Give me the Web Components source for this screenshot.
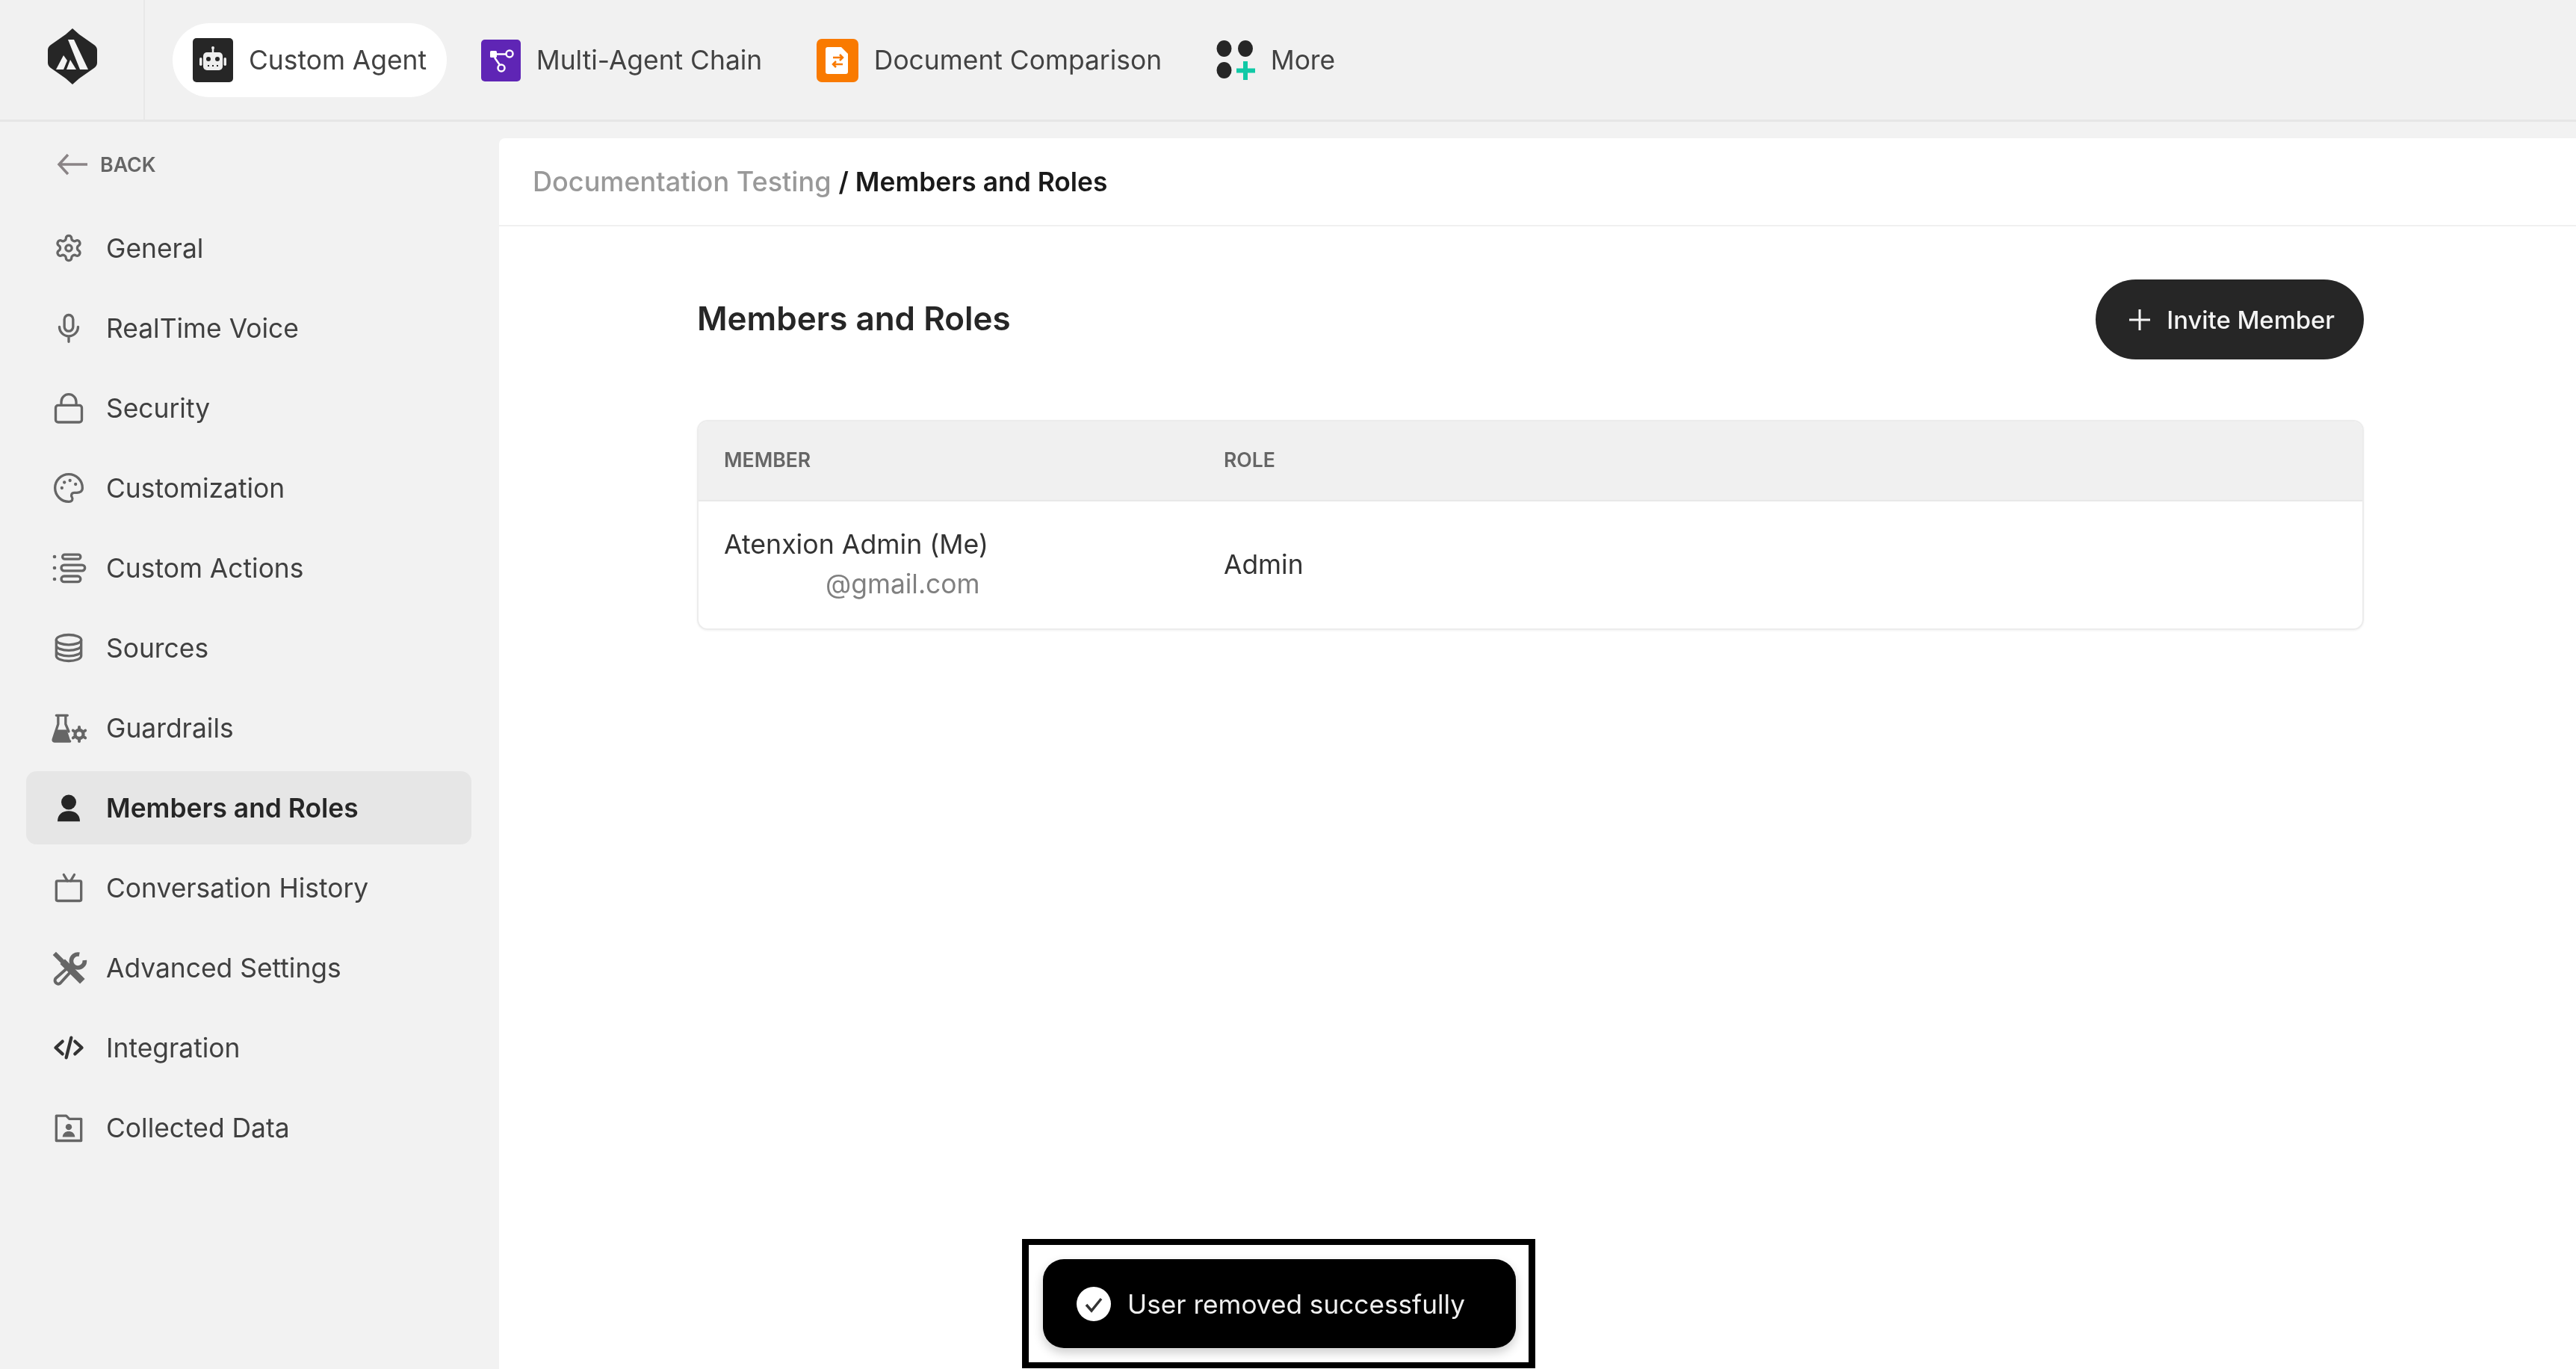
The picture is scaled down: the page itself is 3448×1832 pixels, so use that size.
<!DOCTYPE html>
<html lang="en">
<head>
<meta charset="utf-8">
<title>Members and Roles</title>
<style>
  html, body { margin: 0; height: 100%; background: #f2f2f2; overflow: hidden; }
  body { font-family: 'Inter', 'Liberation Sans', sans-serif; color: #262626; }
</style>
</head>
<body>
<app-shell>
  <top-nav slot="top">
    <nav-tab icon="agent" active>Custom Agent</nav-tab>
    <nav-tab icon="chain">Multi-Agent Chain</nav-tab>
    <nav-tab icon="doc">Document Comparison</nav-tab>
    <nav-tab icon="more">More</nav-tab>
  </top-nav>
  <side-nav slot="side">
    <side-item icon="gear">General</side-item>
    <side-item icon="mic">RealTime Voice</side-item>
    <side-item icon="lock">Security</side-item>
    <side-item icon="palette">Customization</side-item>
    <side-item icon="actions">Custom Actions</side-item>
    <side-item icon="db">Sources</side-item>
    <side-item icon="flask">Guardrails</side-item>
    <side-item icon="person" active>Members and Roles</side-item>
    <side-item icon="tv">Conversation History</side-item>
    <side-item icon="tools">Advanced Settings</side-item>
    <side-item icon="code">Integration</side-item>
    <side-item icon="folder">Collected Data</side-item>
  </side-nav>
  <members-page slot="main"></members-page>
  <toast-note slot="overlay">User removed successfully</toast-note>
</app-shell>

<script>
// icons for the top tabs, each drawn in its own box
const tabIcons = {
  agent: `<svg width="54" height="59" viewBox="0 0 54 59">
    <rect width="54" height="59" rx="5" fill="#262626"/>
    <path d="M27 13v6" stroke="#eee" stroke-width="2.5"/><circle cx="27" cy="13" r="2" fill="#eee"/>
    <rect x="14" y="19" width="26" height="24" rx="5" fill="#eee"/>
    <rect x="9" y="26" width="3.5" height="11" rx="1.7" fill="#eee"/><rect x="41.500" y="26" width="3.500" height="11" rx="1.700" fill="#eee"/>
    <circle cx="21" cy="28" r="3" fill="#262626"/><circle cx="33" cy="28" r="3" fill="#262626"/>
    <path d="M20 37h2m4 0h2m4 0h2" stroke="#262626" stroke-width="2"/></svg>`,
  chain: `<svg width="53" height="56" viewBox="0 0 53 56">
    <rect width="53" height="56" rx="5" fill="#5f25b5"/>
    <rect x="12" y="15" width="9" height="9" rx="1.500" fill="#fff"/>
    <circle cx="38" cy="19" r="4.500" fill="none" stroke="#fff" stroke-width="2.500"/>
    <circle cx="27" cy="38" r="4.500" fill="none" stroke="#fff" stroke-width="2.500"/>
    <path d="M21 19.500h12.500M18 24l7 10" stroke="#fff" stroke-width="2.500" fill="none"/></svg>`,
  doc: `<svg width="56" height="58" viewBox="0 0 56 58">
    <rect width="56" height="58" rx="7" fill="#f97a00"/>
    <path d="M15 11h18l9 9v24a3 3 0 0 1-3 3H15a3 3 0 0 1-3-3V14a3 3 0 0 1 3-3z" fill="#fff"/>
    <path d="M22 25h13M31 21l4 4-4 4M35 34H22M26 30l-4 4 4 4" fill="none" stroke="#f97a00" stroke-width="2.500"/></svg>`,
  more: `<svg width="52" height="54" viewBox="0 0 52 54">
    <ellipse cx="10.500" cy="11" rx="10" ry="11" fill="#262626"/><ellipse cx="39" cy="11" rx="10" ry="11" fill="#262626"/>
    <ellipse cx="10.500" cy="40" rx="10" ry="11" fill="#262626"/>
    <path d="M39 28v25M27 40.500h25" stroke="#10c9a6" stroke-width="6"/></svg>`
};

// sidebar icons share one 24 unit box, a few spill over it on purpose
const sideIcons = {
  gear: `<path d="M12.220 2h-.44a2 2 0 0 0-2 2v.18a2 2 0 0 1-1 1.730l-.43.25a2 2 0 0 1-2 0l-.15-.08a2 2 0 0 0-2.730.73l-.22.38a2 2 0 0 0 .73 2.730l.15.1a2 2 0 0 1 1 1.720v.51a2 2 0 0 1-1 1.740l-.15.09a2 2 0 0 0-.73 2.730l.22.38a2 2 0 0 0 2.730.73l.15-.08a2 2 0 0 1 2 0l.43.25a2 2 0 0 1 1 1.730V20a2 2 0 0 0 2 2h.44a2 2 0 0 0 2-2v-.18a2 2 0 0 1 1-1.730l.43-.25a2 2 0 0 1 2 0l.15.08a2 2 0 0 0 2.730-.73l.22-.39a2 2 0 0 0-.73-2.730l-.15-.08a2 2 0 0 1-1-1.740v-.5a2 2 0 0 1 1-1.740l.15-.09a2 2 0 0 0 .73-2.730l-.22-.38a2 2 0 0 0-2.730-.73l-.15.08a2 2 0 0 1-2 0l-.43-.25a2 2 0 0 1-1-1.730V4a2 2 0 0 0-2-2z"/><circle cx="12" cy="12" r="2.500"/>`,
  mic: `<rect x="8.500" y="1.500" width="7" height="13" rx="3.500"/><path d="M4.500 11a7.500 7.500 0 0 0 15 0M12 18.500v4.500"/>`,
  lock: `<rect x="1.500" y="9.800" width="21" height="13.600" rx="2"/><path d="M6 9.800V7a6 6 0 0 1 12 0v2.800"/>`,
  palette: `<path d="M12 23a11 11 0 1 1 11-11c0 2.800-2.200 3.800-4.400 3.800h-2.100c-2.300 0-3 2.300-1.800 3.900.7 1 .3 3.300-2.700 3.300z"/><g fill="#666" stroke="none"><circle cx="6.500" cy="12" r="1.300"/><circle cx="8.500" cy="7.500" r="1.300"/><circle cx="13" cy="6" r="1.300"/><circle cx="17.500" cy="9" r="1.300"/></g>`,
  actions: `<g fill="#666" stroke="none"><circle cx=".6" cy="3" r="1.400"/><circle cx=".6" cy="12" r="1.400"/><circle cx=".6" cy="21" r="1.400"/></g><rect x="7" y="1.300" width="14.500" height="3.600" rx="1.800"/><rect x="6" y="9.700" width="19" height="4.600" rx="2.300"/><rect x="6" y="18.600" width="15.500" height="4.600" rx="2.300"/>`,
  db: `<ellipse cx="12" cy="5.500" rx="10" ry="4"/><path d="M2 5.500v13c0 2.200 4.500 4 10 4s10-1.800 10-4v-13M2 10c0 2.200 4.500 4 10 4s10-1.800 10-4M2 14.500c0 2.200 4.500 4 10 4s10-1.800 10-4"/>`,
  flask: `<path d="M2 2H11M3.500 2V9L-.5 21.300q-.3 1.500 1 1.500H13M9.500 2V9l2.500 6"/><path d="M2 13.500H10.500L13.500 22.800H.5L-.5 21z" fill="#666" stroke="none"/><circle cx="20.400" cy="17.100" r="3.300" stroke-width="2.600"/><path d="M20.400 11.400v1.800M20.400 21v1.800M15.500 14.200l1.600 1M23.700 19l1.600 1M15.500 20l1.600-1M23.700 15.200l1.600-1" stroke-width="2.400"/>`,
  tv: `<rect x="2" y="6.500" width="20" height="16" rx="1"/><path d="M8 1.500l3 5M16.500 1.500l-3 5"/>`,
  tools: `<path d="M14 9.500L1.500 20.500c-2 2.500 1.500 6 3.800 3.800L16.500 12" stroke-width="2.400"/><path d="M.5 .5L8 8" stroke-width="3.600" stroke-linecap="butt"/><path d="M7 7L23 23" stroke-width="5.500" stroke-linecap="butt"/><path d="M20.500 1.300A5.400 5.400 0 1 0 24.800 6" stroke-width="3.400" stroke-linecap="butt"/>`,
  folder: `<path d="M2 22.500V2.500h8l2.500 2.500h9.500v17.500z"/><circle cx="12" cy="11.500" r="2.500" fill="#666" stroke="none"/><path d="M7 19.500c.3-3 2.200-4.500 5-4.500s4.700 1.500 5 4.500z" fill="#666" stroke="none"/>`
};

const navTabTemplate = document.createElement('template');
navTabTemplate.innerHTML = `
  <style>
    :host { display: block; }
    .tab {
      display: flex;
      align-items: center;
      gap: 21px;
      height: 99px;
      padding: 0 27px;
      border-radius: 50px;
      font-size: 35.400px;
      line-height: 1;
      color: #424242;
      white-space: nowrap;
    }
    :host([active]) .tab { background: #fff; }
    svg { display: block; }
  </style>
  <div class="tab"><span class="icon"></span><slot></slot></div>
`;

class NavTab extends HTMLElement {
  connectedCallback() {
    if (this.shadowRoot) return;
    this.attachShadow({ mode: 'open' });
    this.shadowRoot.appendChild(navTabTemplate.content.cloneNode(true));
    this.shadowRoot.querySelector('.icon').innerHTML = tabIcons[this.getAttribute('icon')];
  }
}
customElements.define('nav-tab', NavTab);

const topNavTemplate = document.createElement('template');
topNavTemplate.innerHTML = `
  <style>
    :host {
      display: flex;
      align-items: stretch;
      height: 163px;
      box-sizing: border-box;
      border-bottom: 3px solid #e6e6e6;
      background: #f1f1f1;
    }
    .logo {
      flex: none;
      width: 194px;
      box-sizing: border-box;
      border-right: 2px solid #e8e8e8;
      padding: 38px 0 0 64px;
    }
    .tabs {
      display: flex;
      align-items: flex-start;
      gap: 18.600px;
      padding: 31px 0 0 37px;
    }
    svg { display: block; }
  </style>
  <div class="logo">
    <svg width="66" height="75" viewBox="0 0 66 75">
      <path d="M33 0l9 8 20 14q4 3 4 7v17q0 4-4 7L42 67l-9 8-9-8L4 53q-4-3-4-7V29q0-4 4-7L24 8z" fill="#262626"/>
      <path d="M27 15h8l19 40H43z" fill="#f4f4f4"/>
      <path d="M21 36l5 7-5 12H11z" fill="#f4f4f4"/>
      <path d="M30 42l8 13H25z" fill="#f4f4f4"/>
    </svg>
  </div>
  <div class="tabs"><slot></slot></div>
`;

class TopNav extends HTMLElement {
  constructor() {
    super();
    this.attachShadow({ mode: 'open' });
    this.shadowRoot.appendChild(topNavTemplate.content.cloneNode(true));
  }
}
customElements.define('top-nav', TopNav);

const sideItemTemplate = document.createElement('template');
sideItemTemplate.innerHTML = `
  <style>
    :host { display: block; }
    .item {
      display: flex;
      align-items: center;
      height: 98px;
      padding-left: 37px;
      gap: 30px;
      border-radius: 14px;
      font-size: 35.400px;
      color: #404040;
    }
    .icon { display: block; }
    svg {
      display: block;
      flex: none;
      width: 40px;
      height: 40px;
      overflow: visible;
      fill: none;
      stroke: #666;
      stroke-width: 2;
      stroke-linecap: round;
      stroke-linejoin: round;
    }
    :host([active]) .item { background: #e6e6e6; color: #262626; font-weight: 600; }
    .code { stroke: #333; stroke-width: 2.600; }
    .solid { fill: #262626; stroke: none; }
  </style>
  <div class="item"><span class="icon"></span><slot></slot></div>
`;

class SideItem extends HTMLElement {
  connectedCallback() {
    if (this.shadowRoot) return;
    this.attachShadow({ mode: 'open' });
    this.shadowRoot.appendChild(sideItemTemplate.content.cloneNode(true));
    const name = this.getAttribute('icon');
    let body = sideIcons[name];
    let cls = '';
    if (name === 'person') {
      body = '<circle cx="12" cy="7.500" r="6"/><path d="M3 23c0-5.500 3.500-8.500 9-8.500s9 3 9 8.500z"/>';
      cls = 'solid';
    }
    if (name === 'code') {
      body = '<path d="M7 7l-5.500 5L7 17M17 7l5.500 5-5.500 5M14 4l-4 16"/>';
      cls = 'code';
    }
    this.shadowRoot.querySelector('.icon').innerHTML = `<svg class="${cls}" viewBox="0 0 24 24">${body}</svg>`;
  }
}
customElements.define('side-item', SideItem);

const sideNavTemplate = document.createElement('template');
sideNavTemplate.innerHTML = `
  <style>
    :host { display: block; padding: 0 37px 0 35px; }
    .back {
      display: flex;
      align-items: center;
      gap: 17px;
      height: 60px;
      padding: 27px 0 0 41px;
      margin-bottom: 33px;
      font-size: 26.800px;
      font-weight: 600;
      color: #666;
    }
    .back svg { display: block; }
    .list { display: grid; gap: 9px; }
  </style>
  <div class="back">
    <svg width="41" height="30" viewBox="0 0 41 30" fill="none" stroke="#8a8486" stroke-width="3.500"><path d="M41 15H3M15 2L3 15l12 13"/></svg>
    <span>BACK</span>
  </div>
  <div class="list"><slot></slot></div>
`;

class SideNav extends HTMLElement {
  constructor() {
    super();
    this.attachShadow({ mode: 'open' });
    this.shadowRoot.appendChild(sideNavTemplate.content.cloneNode(true));
  }
}
customElements.define('side-nav', SideNav);

const membersPageTemplate = document.createElement('template');
membersPageTemplate.innerHTML = `
  <style>
    :host { display: block; height: 100%; background: #fff; border-top-left-radius: 8px; }
    .crumbs {
      display: flex;
      align-items: center;
      gap: 10px;
      height: 118px;
      padding-left: 45px;
      box-sizing: border-box;
      border-bottom: 2px solid #f0f0f0;
      font-size: 36.100px;
      font-weight: 500;
      color: #999;
    }
    .crumbs b { font-size: 35.400px; font-weight: 600; color: #1a1a1a; }
    .content { padding: 71px 284px 0 265px; }
    .head { display: flex; justify-content: space-between; align-items: center; margin-bottom: 81px; }
    h1 { margin: 0 0 4px; font-size: 44px; font-weight: 600; color: #262626; }
    .invite {
      display: flex;
      align-items: center;
      gap: 22px;
      height: 107px;
      padding: 0 39px 0 45px;
      border: 0;
      border-radius: 54px;
      background: #262626;
      color: #f4f4f4;
      font: 500 32.800px 'Inter', 'Liberation Sans', sans-serif;
    }
    .table {
      border: 2px solid #ececec;
      border-radius: 14px;
      overflow: hidden;
      box-shadow: 0 1px 3px rgba(0,0,0,.06);
    }
    .row { display: grid; grid-template-columns: 669px 1fr; align-items: center; padding-left: 34px; }
    .row.th {
      height: 107px;
      padding-bottom: 3px;
      background: #f0f0f0;
      border-bottom: 2px solid #e8e8e8;
      box-sizing: border-box;
      font-size: 26.600px;
      font-weight: 600;
      color: #666;
    }
    .row.td { height: 170px; padding-bottom: 2px; box-sizing: border-box; font-size: 35.400px; color: #333; }
    .name { line-height: 54px; }
    .name div:first-child { font-size: 35.700px; }
    .mail { padding-left: 136px; color: #808080; }
  </style>
  <div class="crumbs"><span>Documentation Testing</span><b>/ Members and Roles</b></div>
  <div class="content">
    <div class="head">
      <h1>Members and Roles</h1>
      <button class="invite">
        <svg width="28" height="28" viewBox="0 0 28 28" stroke="#f4f4f4" stroke-width="3"><path d="M14 0v28M0 14h28"/></svg>
        Invite Member
      </button>
    </div>
    <div class="table">
      <div class="row th"><span>MEMBER</span><span>ROLE</span></div>
      <div class="row td">
        <div class="name"><div>Atenxion Admin (Me)</div><div class="mail">@gmail.com</div></div>
        <div>Admin</div>
      </div>
    </div>
  </div>
`;

class MembersPage extends HTMLElement {
  constructor() {
    super();
    this.attachShadow({ mode: 'open' });
    this.shadowRoot.appendChild(membersPageTemplate.content.cloneNode(true));
  }
}
customElements.define('members-page', MembersPage);

const toastTemplate = document.createElement('template');
toastTemplate.innerHTML = `
  <style>
    :host {
      position: absolute;
      left: 1368px;
      top: 1658px;
      width: 687px;
      height: 173px;
      box-sizing: border-box;
      border: solid #000;
      border-width: 8px 9px;
      background: #fff;
      padding: 19px 17px 19px 19px;
    }
    .toast {
      display: flex;
      align-items: center;
      gap: 22px;
      height: 100%;
      padding-left: 45px;
      border-radius: 28px;
      background: #000;
      color: #f0f0f0;
      font-size: 35.200px;
      box-shadow: 0 6px 14px rgba(0,0,0,.2);
    }
    svg { display: block; flex: none; }
  </style>
  <div class="toast">
    <svg width="46" height="46" viewBox="0 0 46 46"><circle cx="23" cy="23" r="23" fill="#fff"/><path d="M13 24l7 8 13-16" fill="none" stroke="#333" stroke-width="3.500"/></svg>
    <slot></slot>
  </div>
`;

class ToastNote extends HTMLElement {
  constructor() {
    super();
    this.attachShadow({ mode: 'open' });
    this.shadowRoot.appendChild(toastTemplate.content.cloneNode(true));
  }
}
customElements.define('toast-note', ToastNote);

const appShellTemplate = document.createElement('template');
appShellTemplate.innerHTML = `
  <style>
    :host {
      display: grid;
      grid-template-columns: 668px 1fr;
      grid-template-rows: 163px 1fr;
      position: relative;
      height: 1832px;
      background: #f2f2f2;
      filter: blur(.6px);
    }
    .top { grid-column: 1 / 3; }
    .main { padding-top: 22px; height: 1669px; box-sizing: border-box; }
  </style>
  <div class="top"><slot name="top"></slot></div>
  <div class="side"><slot name="side"></slot></div>
  <div class="main"><slot name="main"></slot></div>
  <slot name="overlay"></slot>
`;

class AppShell extends HTMLElement {
  constructor() {
    super();
    this.attachShadow({ mode: 'open' });
    this.shadowRoot.appendChild(appShellTemplate.content.cloneNode(true));
  }
}
customElements.define('app-shell', AppShell);
</script>
</body>
</html>
